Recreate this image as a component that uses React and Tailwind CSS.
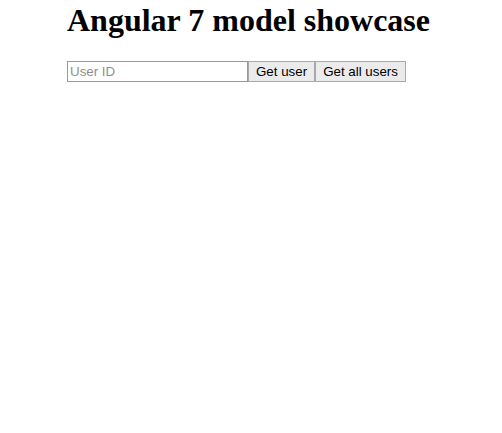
import React from "react";

export default function App() {
  return (
    <div className="bg-white min-h-[433px] pl-[67px] pt-0" style={{ fontFamily: '"Liberation Sans", Arial, sans-serif' }}>
      <h1 className="text-[32px] font-bold leading-[37px] text-black mb-[22px] pt-[2px]" style={{ fontFamily: '"Liberation Serif", "Times New Roman", serif' }}>
        Angular 7 model showcase
      </h1>
      <div className="flex items-start">
        <input
          type="text"
          placeholder="User ID"
          className="w-[181px] h-[21px] border border-[#999999] px-[2px] text-[13.33px] text-black placeholder:text-[#8e8e8e] outline-none"
        />
        <button className="h-[21px] px-[7px] border border-[#a9a9a9] bg-[#ebebeb] text-[13.33px] text-black">
          Get user
        </button>
        <button className="h-[21px] px-[7px] border border-[#a9a9a9] bg-[#ebebeb] text-[13.33px] text-black">
          Get all users
        </button>
      </div>
    </div>
  );
}
